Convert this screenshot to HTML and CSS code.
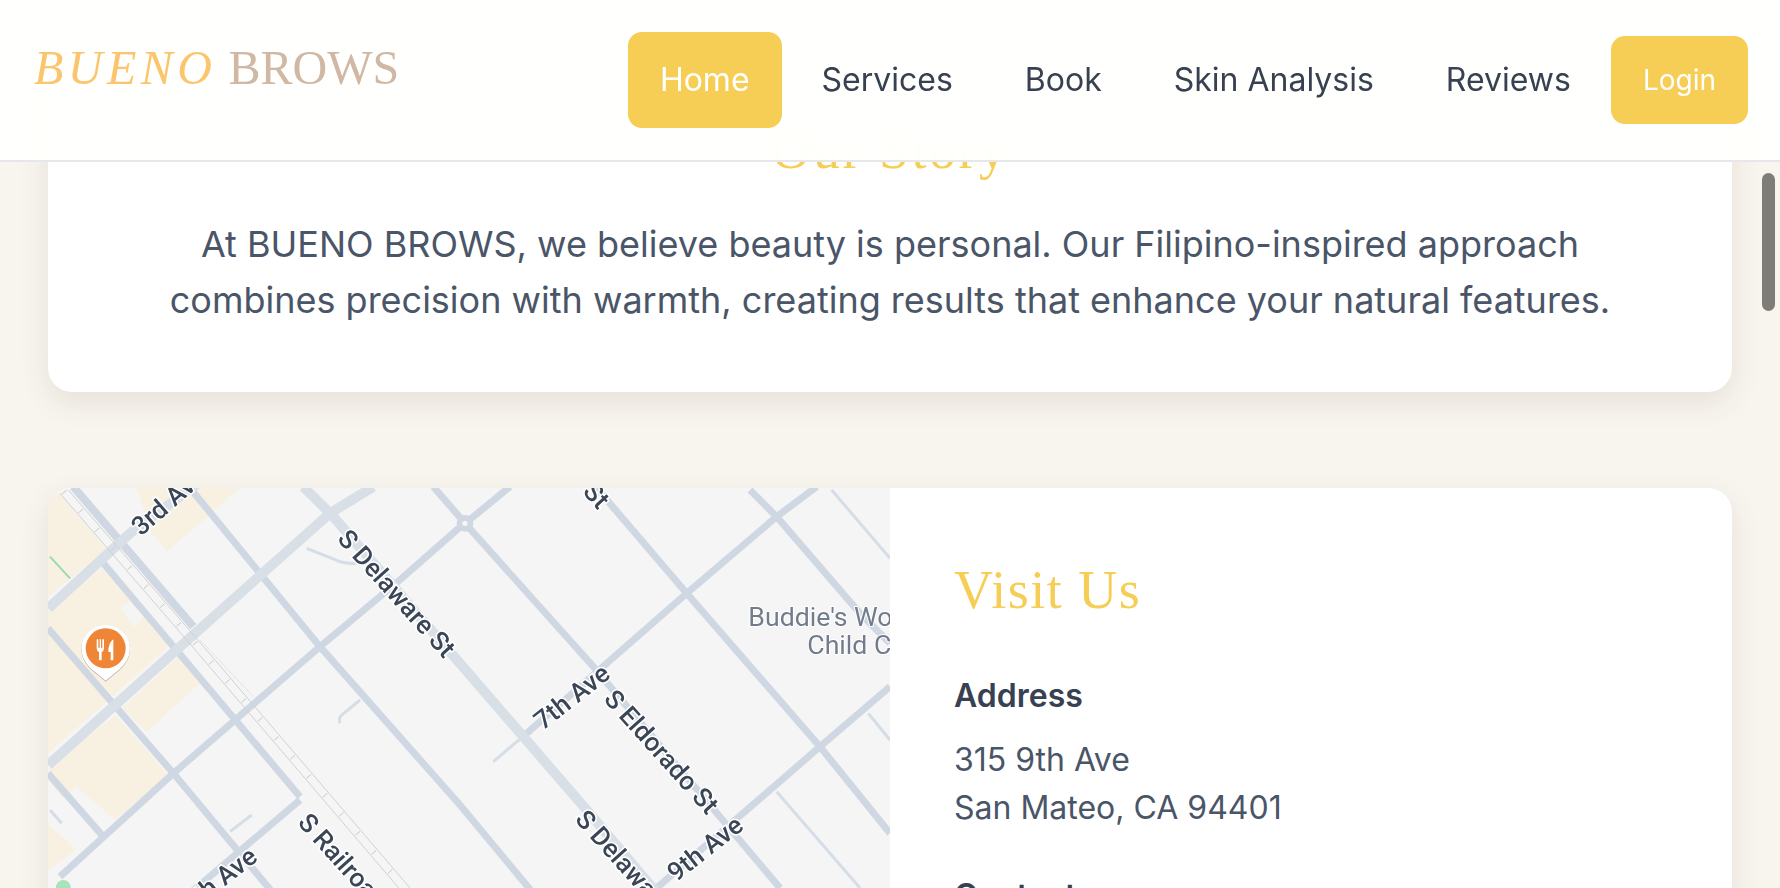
FILE: index.html
```html
<!DOCTYPE html>
<html lang="en">
<head>
    <meta charset="UTF-8">
    <title>Bueno Brows</title>
    <link rel="stylesheet" href="styles.css">
</head>
<body>
    <header class="site-header">
        <a class="logo" href="#"><span class="logo-accent">BUENO</span> BROWS</a>
        <nav class="site-nav">
            <a class="nav-link active" href="#">Home</a>
            <a class="nav-link" href="#">Services</a>
            <a class="nav-link" href="#">Book</a>
            <a class="nav-link" href="#">Skin Analysis</a>
            <a class="nav-link" href="#">Reviews</a>
            <a class="login-btn" href="#">Login</a>
        </nav>
    </header>

    <div class="scroll-thumb"></div>

    <main class="page">
        <!-- Our Story -->
        <section class="card story">
            <h2 class="section-title">Our Story</h2>
            <p class="story-text">At BUENO BROWS, we believe beauty is personal. Our Filipino-inspired approach combines precision with warmth, creating results that enhance your natural features.</p>
        </section>

        <!-- Visit Us -->
        <section class="card visit">
            <div class="map">
                <svg class="map-art" viewBox="24 24 2526 1200" role="img" aria-label="Map of San Mateo">
                    <!-- blocks -->
                    <g class="blocks">
                        <polygon points="24,60 60,40 200,210 24,350"/>
                        <polygon points="24,390 185,265 390,495 200,665 24,820"/>
                        <polygon points="245,685 415,530 480,610 320,755"/>
                        <polygon points="30,860 225,705 385,885 225,1020 110,920 70,960 24,900"/>
                        <polygon points="290,24 600,24 490,120 380,215 335,160"/>
                        <polygon points="24,1030 110,1110 24,1170"/>
                    </g>
                    <polygon class="patch" points="240,385 270,365 310,410 285,440"/>
                    <polygon class="patch" points="24,990 110,925 215,1020 170,1060 110,1110 24,1030"/>
                    <line class="trail" x1="30" y1="230" x2="90" y2="295"/>
                    <circle class="park" cx="70" cy="1222" r="22"/>

                    <!-- streets -->
                    <g class="road-thin">
                        <path d="M1460 760L1360 845"/>
                        <path d="M2375 30L2550 235"/>
                        <path d="M2210 935L2460 1224"/>
                        <path d="M2485 700L2550 780"/>
                        <path d="M800 205L900 245Q930 252 950 250"/>
                        <path d="M960 660L905 705Q895 715 900 730"/>
                        <path d="M570 1055L635 1005"/>
                        <path d="M30 990L65 1030"/>
                    </g>
                    <g class="road">
                        <path class="road-side" d="M100 20L460 440"/>
                        <path d="M190 250L780 950"/>
                        <path d="M450 24L840 500L1260 975L1480 1240"/>
                        <path d="M24 445L400 880L700 1240"/>
                        <path d="M24 880L190 1070"/>
                        <path d="M1180 20L1275 130L1660 560L2220 1224"/>
                        <path d="M1670 24L1940 340L2340 800L2550 1060"/>
                        <path d="M2130 30L2210 110L2460 400L2550 490"/>
                        <path d="M60 1190L400 880L840 500L1085 295L1250 150L1300 110L1410 20"/>
                        <path d="M450 1240L780 960"/>
                        <path d="M1460 760L1940 340L2210 110L2330 20"/>
                        <path d="M1850 1224L2340 800L2550 620"/>
                    </g>
                    <g class="road-major">
                        <path d="M25 385L270 160L500 -10"/>
                        <path d="M25 855L420 500L870 100L1000 20"/>
                        <path d="M790 20L880 110L1640 990L1860 1250"/>
                    </g>
                    <circle class="round-outer" cx="1275" cy="130" r="25"/>
                    <circle class="round-inner" cx="1275" cy="130" r="8"/>

                    <!-- rail -->
                    <g class="rail">
                        <path d="M60 40L440 480L1090 1240"/>
                        <path d="M85 30L465 470L1110 1224"/>
                        <path class="rail-ties" d="M72 35L452 475L1100 1232"/>
                        <path class="rail-spur" d="M480 480L640 650"/>
                    </g>

                    <!-- labels -->
                    <text class="street street-start" transform="translate(285 150) rotate(-41)">3rd Ave</text>
                    <text class="street" transform="translate(1070 340) rotate(48)">S Delaware St</text>
                    <text class="street" transform="translate(1670 46) rotate(48)">St</text>
                    <text class="street" transform="translate(1595 650) rotate(-38)">7th Ave</text>
                    <text class="street" transform="translate(1865 815) rotate(48)">S Eldorado St</text>
                    <text class="street" transform="translate(1995 1105) rotate(-38)">9th Ave</text>
                    <text class="street street-start" transform="translate(1622 1002) rotate(48)">S Delaware St</text>
                    <text class="street street-start" transform="translate(790 1012) rotate(48)">S Railroad Ave</text>
                    <text class="street street-end" transform="translate(640 1118) rotate(-38)">8th Ave</text>
                    <text class="place" x="2125" y="437">Buddie's Worship</text>
                    <text class="place" x="2302" y="522">Child Care</text>

                    <!-- restaurant pin -->
                    <g class="pin">
                        <path class="pin-body" d="M197 435C158 435 124 467 124 505C124 538 146 563 170 580L197 602L224 580C248 563 270 538 270 505C270 467 236 435 197 435Z"/>
                        <circle class="pin-face" cx="197" cy="505" r="60"/>
                        <path class="pin-icon" d="M170 478V505Q170 514 177 516V541H185V516Q192 514 192 505V478H187V503H183V478H179V503H175V478Z"/>
                        <path class="pin-icon" d="M220 478Q205 488 205 516H212V541H220Z"/>
                    </g>
                </svg>
            </div>
            <div class="visit-info">
                <h2 class="section-title">Visit Us</h2>
                <div class="info-block">
                    <h3 class="info-label">Address</h3>
                    <p class="info-text">315 9th Ave<br>San Mateo, CA 94401</p>
                </div>
                <div class="info-block">
                    <h3 class="info-label">Contact</h3>
                </div>
            </div>
        </section>
    </main>
</body>
</html>
```

FILE: styles.css
```css
* {
    box-sizing: border-box;
}
html, body {
    height: 100%;
    margin: 0;
    overflow: hidden;
}
body {
    background: #f8f5ef;
    font-family: Inter, "Liberation Sans", sans-serif;
    color: #4a5568;
}
a {
    text-decoration: none;
}

/* header */
.site-header {
    position: fixed;
    top: 0;
    left: 0;
    right: 0;
    z-index: 10;
    height: 162px;
    padding: 0 32px 0 34px;
    display: flex;
    justify-content: space-between;
    align-items: center;
    background: rgba(255, 255, 253, 0.95);
    backdrop-filter: blur(6px);
    border-bottom: 2px solid #e5e7eb;
}
.logo {
    align-self: flex-start;
    margin-top: 40px;
    font-family: "Liberation Serif", serif;
    font-size: 48px;
    line-height: 56px;
    color: #d0b8a4;
}
.logo-accent {
    font-style: italic;
    letter-spacing: 4.5px;
    color: #fbc56d;
}
.site-nav {
    display: flex;
    align-items: center;
    gap: 8px;
}
.nav-link {
    height: 96px;
    padding: 0 32px 2px;
    display: flex;
    align-items: center;
    border-radius: 14px;
    font-size: 32px;
    color: #374151;
}
.nav-link.active {
    background: #f6ce56;
    color: #fff;
}
.login-btn {
    height: 88px;
    padding: 0 32px;
    display: flex;
    align-items: center;
    border-radius: 14px;
    background: #f6ce56;
    color: #fff;
    font-size: 28px;
}
.scroll-thumb {
    position: fixed;
    top: 173px;
    right: 5px;
    z-index: 11;
    width: 13px;
    height: 138px;
    border-radius: 7px;
    background: #7e7d78;
}

/* page */
.page {
    padding: 54px 48px 0;
}
.card {
    background: #fff;
    border-radius: 24px;
    box-shadow: 0 10px 30px rgba(70, 50, 20, 0.1);
}
.section-title {
    margin: 0;
    font-family: "Liberation Serif", serif;
    font-size: 54px;
    font-weight: 400;
    letter-spacing: 1.5px;
    color: #f6ce56;
}
.story {
    padding: 64px 64px 64px;
    text-align: center;
}
.story .section-title {
    line-height: 65px;
    letter-spacing: 2.5px;
    margin-bottom: 33px;
}
.story-text {
    margin: 0 auto;
    max-width: 1480px;
    font-size: 36px;
    line-height: 56px;
}

/* visit */
.visit {
    margin-top: 96px;
    display: grid;
    grid-template-columns: 1fr 1fr;
    overflow: hidden;
}
.map {
    background: #f5f5f5;
}
.map-art {
    display: block;
    width: 842px;
    height: 400px;
    filter: blur(0.5px);
}
.blocks polygon {
    fill: #f8f1e2;
}
.patch {
    fill: #f5f5f5;
}
.trail {
    stroke: #95dcae;
    stroke-width: 6;
}
.park {
    fill: #a9e2bb;
}
.road, .road-major, .road-thin {
    fill: none;
}
.road path {
    stroke: #cfd8e2;
    stroke-width: 21;
}
.road .road-side {
    stroke-width: 24;
}
.road-major path {
    stroke: #d8dfe7;
    stroke-width: 30;
}
.road-thin path {
    stroke: #d5dde6;
    stroke-width: 9;
}
.round-outer {
    fill: #cfd8e2;
}
.round-inner {
    fill: #f5f5f5;
}
.rail path {
    fill: none;
    stroke: #d0d1d2;
    stroke-width: 3;
}
.rail .rail-ties {
    stroke-width: 18;
    stroke-dasharray: 3 72;
}
.rail .rail-spur {
    stroke: #e2e3e4;
}
.street {
    font-family: Roboto, sans-serif;
    font-size: 78px;
    font-weight: 500;
    text-anchor: middle;
    fill: #3a4556;
    stroke: #fff;
    stroke-width: 9px;
    paint-order: stroke;
    dominant-baseline: central;
}
.street-start {
    text-anchor: start;
}
.street-end {
    text-anchor: end;
}
.place {
    font-family: Roboto, sans-serif;
    font-size: 80px;
    fill: #727c8c;
    stroke: #fff;
    stroke-width: 6px;
    paint-order: stroke;
}
.pin {
    filter: drop-shadow(0 2px 2px rgba(0, 0, 0, 0.35));
}
.pin-body {
    fill: #fff;
}
.pin-face {
    fill: #ef8537;
}
.pin-icon {
    fill: #fff;
}
.visit-info {
    padding: 64px;
}
.visit-info .section-title {
    line-height: 76px;
    margin-bottom: 46px;
}
.info-block {
    margin-bottom: 43px;
}
.info-label {
    margin: 0 0 18px;
    font-size: 32px;
    line-height: 44px;
    font-weight: 600;
    color: #374151;
}
.info-text {
    margin: 0;
    font-size: 32px;
    line-height: 47.5px;
}
```
